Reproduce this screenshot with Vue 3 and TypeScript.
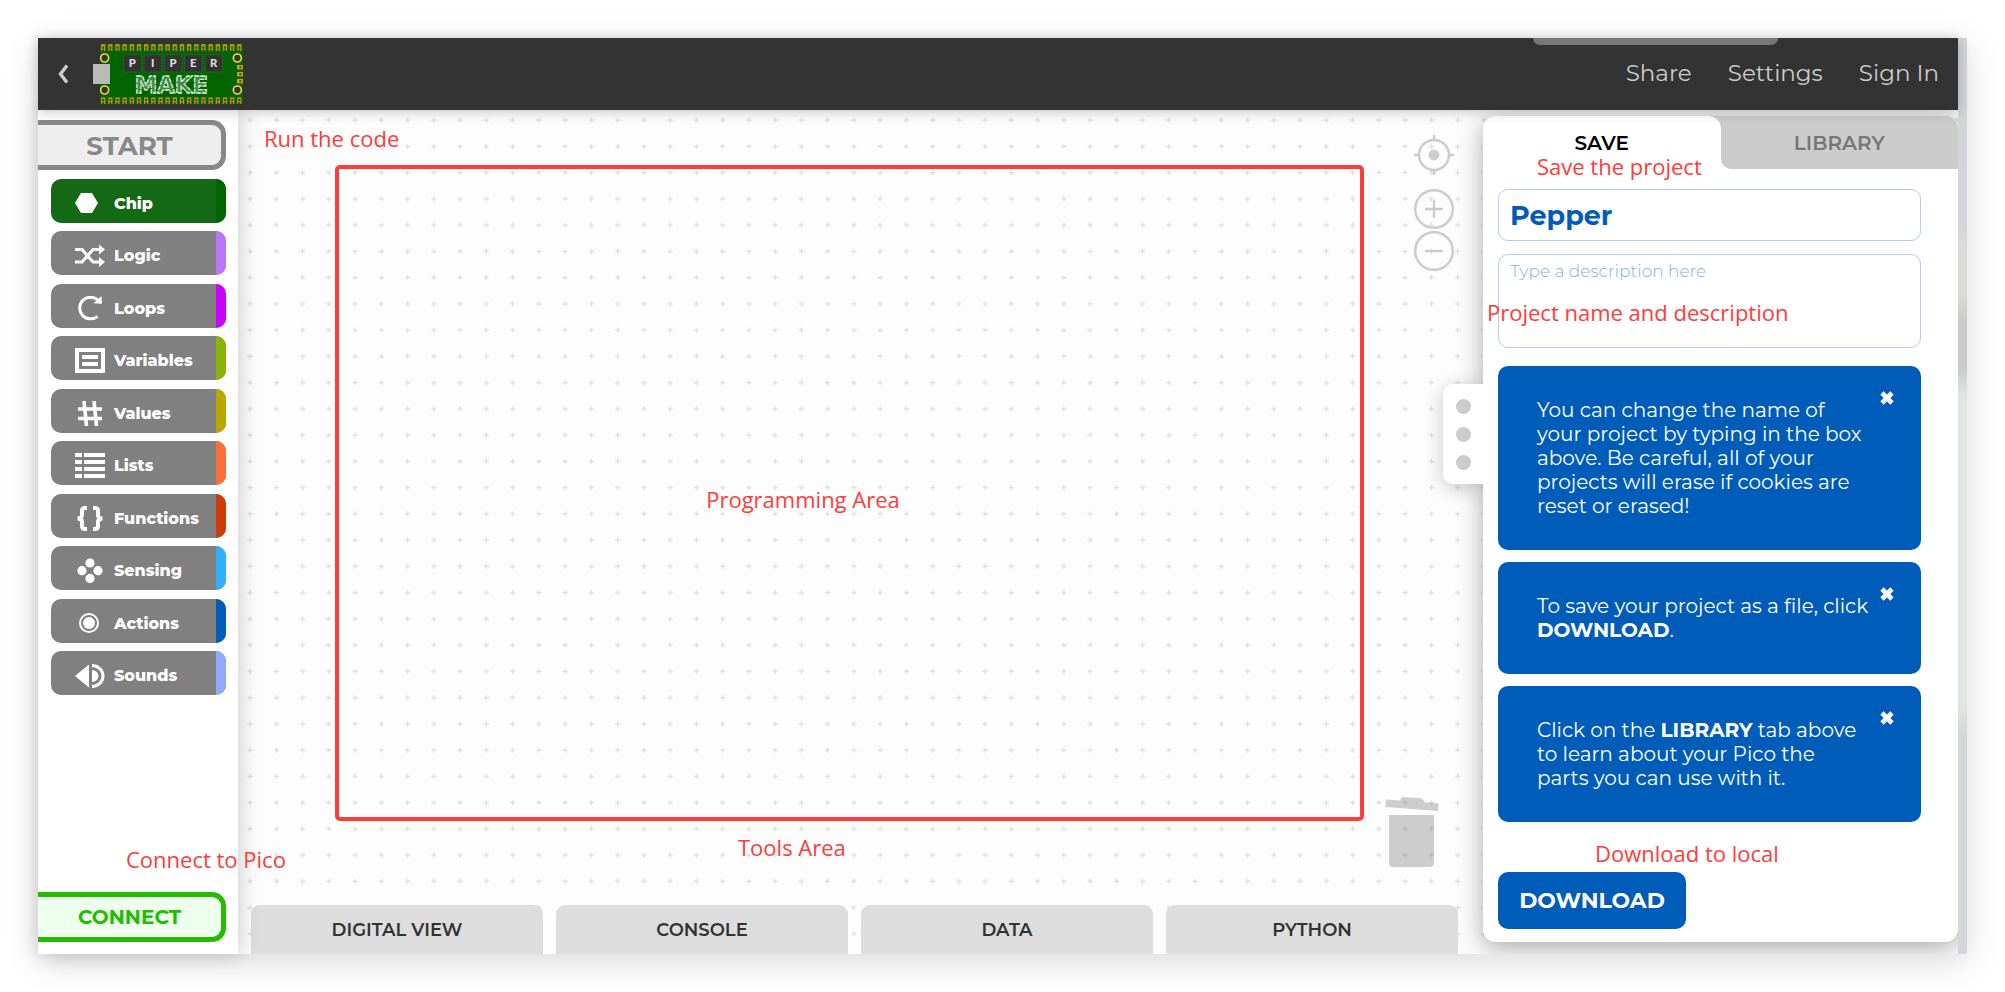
<script setup lang="ts">
import { ref } from 'vue'

interface Category {
  id: string
  label: string
  color: string
}

const categories: Category[] = [
  { id: 'chip', label: 'Chip', color: '#006400' },
  { id: 'logic', label: 'Logic', color: '#bb77f9' },
  { id: 'loops', label: 'Loops', color: '#cc00ff' },
  { id: 'variables', label: 'Variables', color: '#88b500' },
  { id: 'values', label: 'Values', color: '#bba600' },
  { id: 'lists', label: 'Lists', color: '#ff6f3b' },
  { id: 'functions', label: 'Functions', color: '#cf3a06' },
  { id: 'sensing', label: 'Sensing', color: '#2fb0fb' },
  { id: 'actions', label: 'Actions', color: '#005cb9' },
  { id: 'sounds', label: 'Sounds', color: '#93a9ff' },
]

const tools: string[] = ['DIGITAL VIEW', 'CONSOLE', 'DATA', 'PYTHON']
const tiles: string[] = ['P', 'I', 'P', 'E', 'R']

const selected = ref<string>('chip')
const panelTab = ref<'save' | 'library'>('save')
const projectName = ref<string>('Pepper')
const description = ref<string>('')
const showName = ref<boolean>(true)
const showDownload = ref<boolean>(true)
const showLibrary = ref<boolean>(true)
</script>

<template>
  <div class="page">
    <div class="frame">
      <div class="app">
        <header class="header">
          <button class="back" type="button" aria-label="Back">
            <svg width="12" height="20" viewBox="0 0 12 20"><path d="M9 1.5 L2.5 10 L9 18.5" fill="none" stroke="#ccc" stroke-width="3.4" /></svg>
          </button>
          <svg class="logo" viewBox="0 0 450 180" role="img" aria-label="Piper Make">
            <rect x="21" width="429" height="180" fill="#006400" />
            <g v-for="n in 20" :key="n">
              <rect :x="24 + (n - 1) * 21.5" y="0" width="13" height="21" fill="#b3920f" />
              <rect :x="28 + (n - 1) * 21.5" y="8" width="5" height="6" fill="#333" />
              <rect :x="28 + (n - 1) * 21.5" y="17" width="5" height="4" fill="#333" />
              <rect :x="24 + (n - 1) * 21.5" y="160" width="13" height="20" fill="#b3920f" />
              <rect :x="28 + (n - 1) * 21.5" y="165" width="5" height="6" fill="#333" />
              <rect :x="28 + (n - 1) * 21.5" y="175" width="5" height="5" fill="#333" />
            </g>
            <g v-for="n in 3" :key="'s' + n">
              <rect x="432" :y="63 + (n - 1) * 21" width="18" height="13" fill="#c9a40c" />
              <rect x="439" :y="67 + (n - 1) * 21" width="6" height="5" fill="#333" />
            </g>
            <g fill="#333" stroke="#f5d547" stroke-width="5">
              <circle cx="35" cy="42" r="12" /><circle cx="433" cy="42" r="12" />
              <circle cx="35" cy="138" r="12" /><circle cx="433" cy="138" r="12" />
            </g>
            <rect y="60" width="51" height="60" fill="#b6bbb6" />
            <g v-for="(t, i) in tiles" :key="'t' + i">
              <rect :x="92 + i * 61" y="32" width="53" height="52" fill="#333" stroke="#3d8a3d" stroke-width="2" stroke-dasharray="4 3" />
              <text class="tile" :x="118 + i * 61" y="70" text-anchor="middle">{{ t }}</text>
            </g>
            <text class="make" x="235" y="146" text-anchor="middle">MAKE</text>
          </svg>
          <span class="bump"></span>
          <nav class="links">
            <a href="#share">Share</a>
            <a href="#settings">Settings</a>
            <a href="#signin">Sign In</a>
          </nav>
        </header>

        <div class="body">
          <aside class="sidebar">
            <button class="edge-btn start" type="button">START</button>
            <nav class="categories">
              <button
                v-for="c in categories"
                :key="c.id"
                type="button"
                class="category"
                :class="{ active: selected === c.id }"
                @click="selected = c.id"
              >
                <svg class="icon" viewBox="0 0 30 25" fill="#fff" aria-hidden="true">
                  <path v-if="c.id === 'chip'" d="M0 12 L6 2 H17 L23 12 L17 22 H6 Z" />
                  <g v-else-if="c.id === 'logic'">
                    <path d="M0 6.5 H7 L18 19 H25 M0 19 H7 L18 6.5 H25" fill="none" stroke="#fff" stroke-width="3" />
                    <path d="M24 1.5 L30 6.5 L24 11.5 Z M24 14 L30 19 L24 24 Z" />
                  </g>
                  <g v-else-if="c.id === 'loops'">
                    <path d="M22.5 20.3 A10.8 10.8 0 1 1 23.5 4.8" fill="none" stroke="#fff" stroke-width="3" />
                    <path d="M26.5 0 L27 7.8 L18.5 7.2 L21.5 4.5 Z" />
                  </g>
                  <g v-else-if="c.id === 'variables'">
                    <path d="M2 2 H28 V23 H2 Z" fill="none" stroke="#fff" stroke-width="4" />
                    <path d="M7 7 H23 V11 H7 Z M7 14 H23 V18 H7 Z" />
                  </g>
                  <path v-else-if="c.id === 'values'" d="M9 0 L11.5 25 M19 0 L21.5 25 M3 8 H27 M3 17.5 H27" fill="none" stroke="#fff" stroke-width="3.6" />
                  <path v-else-if="c.id === 'lists'" d="M0 0h7v4h-7z M9 0h21v4h-21z M0 7h7v4h-7z M9 7h21v4h-21z M0 14h7v4h-7z M9 14h21v4h-21z M0 21h7v4h-7z M9 21h21v4h-21z" />
                  <path
                    v-else-if="c.id === 'functions'"
                    d="M12 2 H10 Q7 2 7 5 V9 Q7 12.5 2.5 12.5 Q7 12.5 7 16 V20 Q7 23 10 23 H12 M18 2 H20 Q23 2 23 5 V9 Q23 12.5 27.5 12.5 Q23 12.5 23 16 V20 Q23 23 20 23 H18"
                    fill="none" stroke="#fff" stroke-width="4"
                  />
                  <g v-else-if="c.id === 'sensing'">
                    <circle cx="15" cy="5" r="4.6" /><circle cx="7" cy="12.7" r="4.6" />
                    <circle cx="23" cy="12.7" r="4.6" /><circle cx="15" cy="20.4" r="4.6" />
                  </g>
                  <g v-else-if="c.id === 'actions'">
                    <circle cx="14" cy="12" r="9" fill="none" stroke="#fff" stroke-width="2" /><circle cx="14" cy="12" r="6" />
                  </g>
                  <g v-else>
                    <path d="M0 13 L14 1.5 V24.5 Z M17 7 A6.5 6 0 0 1 17 19 Z" />
                    <path d="M17 2.5 A11 10.5 0 0 1 17 23.5" fill="none" stroke="#fff" stroke-width="3" />
                  </g>
                </svg>
                <span class="label">{{ c.label }}</span>
                <span class="strip" :style="{ background: c.color }"></span>
              </button>
            </nav>
            <span class="note note-connect">Connect to Pico</span>
            <button class="edge-btn connect" type="button">CONNECT</button>
          </aside>

          <main class="workspace">
            <svg class="grid" aria-hidden="true">
              <defs>
                <pattern id="dots" width="21" height="21" patternUnits="userSpaceOnUse" patternTransform="translate(-1 -3) scale(1.25)">
                  <path d="M8.4 10.5 H12.6 M10.5 8.4 V12.6" stroke="#dfdfdf" stroke-width="1" />
                </pattern>
              </defs>
              <rect width="100%" height="100%" fill="url(#dots)" />
            </svg>

            <section class="canvas">
              <div class="area">
                <span class="note note-area">Programming Area</span>
              </div>
              <span class="note note-run">Run the code</span>
              <span class="note note-tools">Tools Area</span>

              <div class="zoom">
                <button type="button" aria-label="Center workspace">
                  <svg width="40" height="40" viewBox="0 0 40 40" fill="none" stroke="#ccc" stroke-width="2.4">
                    <circle cx="20" cy="20" r="15" /><circle cx="20" cy="20" r="5.4" fill="#ccc" stroke="none" />
                    <path d="M20 0V5 M20 35V40 M0 20H5 M35 20H40" />
                  </svg>
                </button>
                <button class="zoom-in" type="button" aria-label="Zoom in">
                  <svg width="40" height="40" viewBox="0 0 40 40" fill="none" stroke="#ccc" stroke-width="2.4">
                    <circle cx="20" cy="20" r="18.8" /><path d="M11 20H29 M20 11V29" />
                  </svg>
                </button>
                <button type="button" aria-label="Zoom out">
                  <svg width="40" height="40" viewBox="0 0 40 40" fill="none" stroke="#ccc" stroke-width="2.4">
                    <circle cx="20" cy="20" r="18.8" /><path d="M11 20H29" />
                  </svg>
                </button>
              </div>

              <svg class="trash" width="54" height="70" viewBox="0 0 54 70" fill="#000" fill-opacity="0.19" aria-hidden="true">
                <path d="M1 2.5 L14.5 3.4 L17.5 0 L36.5 1.3 L40 5.2 L53.5 6.4 L53 14 L0.5 10 Z" />
                <path d="M4 18 H49 V66 Q49 70 45 70 H8 Q4 70 4 66 Z" />
              </svg>

              <nav class="tools">
                <button v-for="t in tools" :key="t" type="button">{{ t }}</button>
              </nav>
            </section>

            <section class="panel">
              <button class="handle" type="button" aria-label="Toggle panel"><i></i><i></i><i></i></button>
              <div class="sheet">
                <div class="tabs" role="tablist">
                  <button class="save" type="button" role="tab" :aria-selected="panelTab === 'save'" @click="panelTab = 'save'">SAVE</button>
                  <button class="library" type="button" role="tab" :aria-selected="panelTab === 'library'" @click="panelTab = 'library'">LIBRARY</button>
                </div>
                <span class="note note-save">Save the project</span>
                <form class="fields" @submit.prevent>
                  <input v-model="projectName" class="name" type="text" aria-label="Project name" />
                  <div class="desc-wrap">
                    <textarea v-model="description" class="desc" aria-label="Project description" placeholder="Type a description here"></textarea>
                    <span class="note note-desc">Project name and description</span>
                  </div>
                  <div class="cards">
                    <article v-if="showName" class="card">
                      <p>You can change the name of your project by typing in the box above. Be careful, all of your projects will erase if cookies are reset or erased!</p>
                      <button type="button" class="close" aria-label="Dismiss" @click="showName = false">
                        <svg width="14" height="14" viewBox="0 0 14 14"><path d="M2 2 L12 12 M12 2 L2 12" stroke="#fff" stroke-width="4.6" /></svg>
                      </button>
                    </article>
                    <article v-if="showDownload" class="card">
                      <p>To save your project as a file, click <b>DOWNLOAD</b>.</p>
                      <button type="button" class="close" aria-label="Dismiss" @click="showDownload = false">
                        <svg width="14" height="14" viewBox="0 0 14 14"><path d="M2 2 L12 12 M12 2 L2 12" stroke="#fff" stroke-width="4.6" /></svg>
                      </button>
                    </article>
                    <article v-if="showLibrary" class="card">
                      <p>Click on the <b>LIBRARY</b> tab above to learn about your Pico the parts you can use with it.</p>
                      <button type="button" class="close" aria-label="Dismiss" @click="showLibrary = false">
                        <svg width="14" height="14" viewBox="0 0 14 14"><path d="M2 2 L12 12 M12 2 L2 12" stroke="#fff" stroke-width="4.6" /></svg>
                      </button>
                    </article>
                  </div>
                  <div class="download-row">
                    <span class="note note-download">Download to local</span>
                    <button class="download" type="button">DOWNLOAD</button>
                  </div>
                </form>
              </div>
            </section>
          </main>
        </div>
      </div>
      <div class="rail"></div>
    </div>
  </div>
</template>

<style>
body {
  margin: 0;
  background: #fff;
}
</style>

<style scoped>
* {
  box-sizing: border-box;
}
.page {
  min-height: 100vh;
  padding: 38px;
  display: flex;
  font-family: Montserrat, Inter, "Open Sans", sans-serif;
  overflow: hidden;
}
button {
  font-family: inherit;
  border: 0;
  padding: 0;
  margin: 0;
  background: none;
  cursor: pointer;
}
svg {
  display: block;
}
.frame {
  flex: 1;
  display: flex;
  box-shadow: 0 8px 32px rgba(0, 0, 0, 0.15);
}
.app {
  flex: 1;
  min-width: 0;
  display: flex;
  flex-direction: column;
  background: #fff;
}
.rail {
  width: 9px;
  background: linear-gradient(#d2d4d5 0 6%, #d4d4da 14% 20%, #dbdcd7 23%, #dadad8 28%, #cacaca 31% 36%, #dfe6df 39% 73%, #d5d6d9 76%);
}

.header {
  position: relative;
  z-index: 3;
  height: 72px;
  padding: 0 19px 0 20px;
  background: #333;
  display: flex;
  align-items: center;
  box-shadow: 0 2px 12px rgba(0, 0, 0, 0.22);
}
.back {
  width: 12px;
}
.logo {
  width: 150px;
  height: 60px;
  margin-left: 23px;
}
.tile {
  font: 900 34px Lato, sans-serif;
  fill: #ddd;
}
.make {
  font: 700 68px "DejaVu Sans", sans-serif;
  fill: #3f8a3f;
  stroke: #d9ead9;
  stroke-width: 4;
  stroke-dasharray: 14 3;
}
.bump {
  position: absolute;
  top: 0;
  right: 180px;
  width: 245px;
  height: 7px;
  border-radius: 0 0 12px 12px;
  background: #777;
}
.links {
  margin-left: auto;
  padding-bottom: 3px;
  display: flex;
  gap: 36px;
}
.links a {
  color: #ccc;
  font-size: 23px;
  line-height: 28px;
  font-weight: 400;
  text-decoration: none;
}

.body {
  flex: 1;
  display: flex;
}
.sidebar {
  position: relative;
  z-index: 2;
  width: 200px;
  padding: 10px 12px 12px 0;
  display: flex;
  flex-direction: column;
  background: #fff;
  box-shadow: 2px 0 20px rgba(0, 0, 0, 0.2);
}
.edge-btn {
  height: 50px;
  border: 5px solid #888;
  border-left: 0;
  border-radius: 0 14px 14px 0;
  background: #eee;
  color: #888;
  font-size: 26px;
  font-weight: 700;
}
.start {
  padding-top: 1px;
}
.connect {
  margin-top: auto;
  border-color: #24bc00;
  background: #edffed;
  color: #24bc00;
  font-size: 20px;
}
.categories {
  display: flex;
  flex-direction: column;
  gap: 8px;
  padding: 9px 0 0 13px;
}
.category {
  height: 44px;
  padding: 4px 0 0 24px;
  display: flex;
  align-items: center;
  position: relative;
  overflow: hidden;
  border-radius: 10px;
  background: #808080;
  color: #fff;
  font-size: 16px;
  font-weight: 800;
}
.category:nth-child(even) {
  margin-bottom: 1px;
}
.category.active {
  background: #146914;
}
.icon {
  width: 30px;
  height: 25px;
}
.label {
  margin-left: 9px;
}
.strip {
  position: absolute;
  top: 0;
  right: 0;
  bottom: 0;
  width: 10px;
}

.note {
  position: absolute;
  color: #ff3b3b;
  font-family: "Segoe UI", "Open Sans", sans-serif;
  font-size: 22px;
  font-weight: 400;
  line-height: 30px;
  white-space: nowrap;
  pointer-events: none;
}
.note-connect {
  left: 88px;
  bottom: 80px;
}
.note-run {
  left: 26px;
  top: 13px;
}
.note-tools {
  left: 500px;
  bottom: 92px;
}
.note-save {
  left: 54px;
  top: 35px;
}
.note-desc {
  left: -11px;
  top: 43px;
}
.note-download {
  left: 97px;
  top: -34px;
}

.workspace {
  flex: 1;
  min-width: 0;
  position: relative;
  display: flex;
  background: #fdfdfd;
}
.grid {
  position: absolute;
  inset: 0;
  width: 100%;
  height: 100%;
}
.canvas {
  flex: 1;
  min-width: 0;
  position: relative;
  display: flex;
  flex-direction: column;
}
.area {
  flex: 1;
  margin: 55px 119px 84px 97px;
  padding: 12px 93px 0 0;
  border: 4px solid #ff3b3b;
  border-radius: 5px;
  display: flex;
  align-items: center;
  justify-content: center;
}
.note-area {
  position: static;
}
.zoom {
  position: absolute;
  top: 25px;
  right: 29px;
  display: flex;
  flex-direction: column;
  gap: 2px;
}
.zoom-in {
  margin-top: 12px;
}
.trash {
  position: absolute;
  right: 44px;
  bottom: 87px;
}
.tools {
  padding: 0 25px 0 13px;
  display: grid;
  grid-template-columns: repeat(4, 1fr);
  gap: 13px;
}
.tools button {
  height: 49px;
  border-radius: 9px 9px 0 0;
  background: #ddd;
  color: #333;
  font-size: 18px;
  font-weight: 600;
}

.panel {
  position: relative;
  width: 475px;
  padding: 6px 0 12px;
  display: flex;
}
.sheet {
  position: relative;
  flex: 1;
  border-radius: 13px;
  background: #fff;
  box-shadow: 0 6px 26px rgba(0, 0, 0, 0.34);
  clip-path: inset(-40px 0 -12px -60px);
}
.handle {
  position: absolute;
  top: 274px;
  left: -40px;
  width: 40px;
  height: 100px;
  display: flex;
  flex-direction: column;
  align-items: center;
  justify-content: center;
  gap: 13px;
  border-radius: 10px 0 0 10px;
  background: #fff;
  box-shadow: 0 4px 20px rgba(0, 0, 0, 0.22);
  z-index: 1;
  clip-path: inset(-40px 0 -40px -40px);
}
.handle i {
  width: 15px;
  height: 15px;
  border-radius: 50%;
  background: #ccc;
}
.tabs {
  display: grid;
  grid-template-columns: 1fr 1fr;
  overflow: hidden;
  border-radius: 13px 13px 0 0;
  background: linear-gradient(#ccc 50%, #fff 50%);
}
.tabs button {
  height: 53px;
  padding-top: 1px;
  font-size: 20px;
  font-weight: 600;
}
.tabs .save {
  border-radius: 0 13px 0 0;
  background: #fff;
  color: #000;
}
.tabs .library {
  border-radius: 0 0 0 10px;
  background: #ccc;
  color: #777;
}
.fields {
  padding: 20px 37px 12px 15px;
}
.name,
.desc {
  display: block;
  width: 100%;
  border: 1px solid #b3cde9;
  border-radius: 10px;
  background: transparent;
  color: #005cb9;
  font-family: inherit;
  outline: none;
}
.name {
  height: 52px;
  padding: 0 11px;
  font-size: 27px;
  font-weight: 700;
}
.desc-wrap {
  position: relative;
  margin: 13px 0 18px;
}
.desc {
  height: 94px;
  padding: 5px 11px;
  font-size: 17px;
  font-weight: 300;
  line-height: 22px;
  resize: none;
}
.desc::placeholder {
  color: #86b1dd;
  opacity: 1;
}
.cards {
  display: grid;
  gap: 12px;
}
.card {
  position: relative;
  padding: 32px 50px 32px 39px;
  border-radius: 10px;
  background: #005cb9;
  color: #fff;
  font-size: 20px;
  line-height: 24px;
}
.card p {
  margin: 0;
}
.close {
  position: absolute;
  top: 25px;
  right: 27px;
}
.download-row {
  position: relative;
  margin-top: 50px;
}
.download {
  width: 188px;
  height: 57px;
  border-radius: 10px;
  background: #005cb9;
  color: #fff;
  font-size: 22px;
  font-weight: 700;
}
</style>
